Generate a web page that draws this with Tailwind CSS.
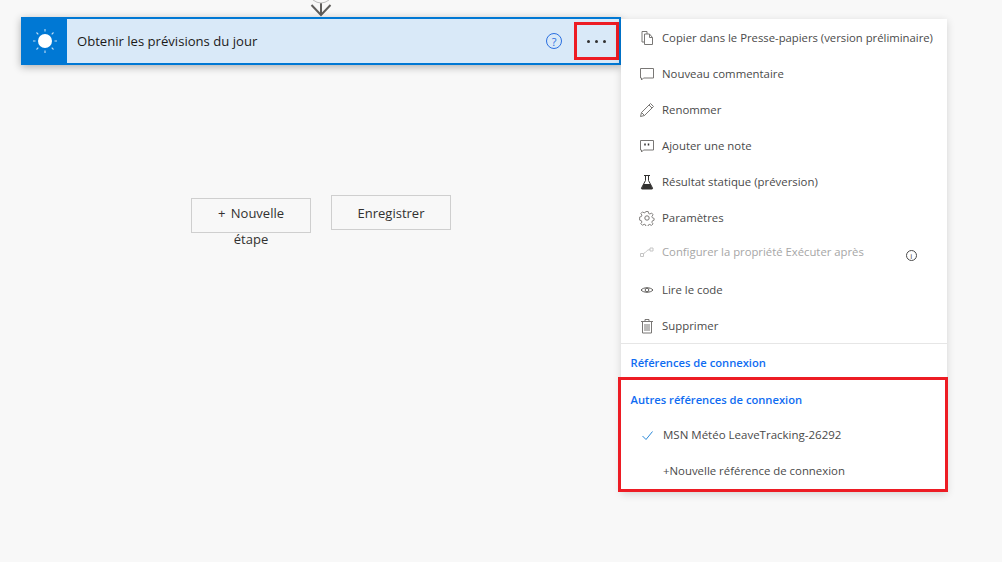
<!DOCTYPE html>
<html lang="fr">

<head>
  <meta charset="UTF-8" />
  <title>Obtenir les prévisions du jour</title>
  <script src="https://cdn.jsdelivr.net/npm/@tailwindcss/browser@4"></script>
</head>

<body class="bg-[#f8f8f8] text-[#323130] font-['Open_Sans','Noto_Sans',sans-serif] overflow-hidden">
  <div class="flex w-[1002px] h-[562px] items-start">

    <!-- Flow canvas -->
    <div class="w-[621px] shrink-0 pl-[21px]">
      <div class="h-[17px] pl-[288px] overflow-hidden">
        <svg width="24" height="17" viewBox="0 0 24 17" fill="none">
          <path d="M12 3v12" stroke="#605e5c" stroke-width="2" />
          <path d="M2.500 5 12 15 21.500 5" stroke="#605e5c" stroke-width="2" />
          <path d="M4 0Q12 6 20 0" stroke="#bdbdbd" stroke-width="1" />
        </svg>
      </div>

      <div class="relative flex w-[600px] h-[48px] border-2 border-l-0 border-[#0078d4] bg-[#d9e9f8] shadow-[0_2px_8px_rgba(0,0,0,0.3)]">
        <div class="flex w-[46px] h-[48px] -my-[2px] pl-px shrink-0 items-center justify-center bg-[#0078d4]">
          <svg width="24" height="24" viewBox="0 0 24 24" fill="none">
            <circle cx="12" cy="12" r="7" fill="#fff" />
            <path d="M12 0v2.500M12 21.500V24M0 12h2.500M21.500 12H24M3.500 3.500 5.300 5.300M18.700 18.700l1.800 1.800M3.500 20.500l1.800-1.800M18.700 5.300l1.800-1.800" stroke="#fff" stroke-width="1.100" opacity="0.75" />
          </svg>
        </div>
        <span class="ml-[10px] text-[13.100px] leading-[44px] text-[#1b1a19]">Obtenir les prévisions du jour</span>
        <div class="ml-auto flex items-center">
          <span class="flex w-4 h-4 items-center justify-center rounded-full border border-[#2a6fe0] text-[11px] leading-none text-[#2a6fe0]">?</span>
          <div class="flex ml-[12px] w-[45px] h-[38px] items-center justify-center gap-[5px] border-[3px] border-[#ed1c24]">
            <span class="w-[3px] h-[3px] rounded-full bg-[#323130]"></span>
            <span class="w-[3px] h-[3px] rounded-full bg-[#323130]"></span>
            <span class="w-[3px] h-[3px] rounded-full bg-[#323130]"></span>
          </div>
        </div>
      </div>

      <div class="flex items-start gap-5 pl-[170px] pt-[130px]">
        <div class="w-[120px] mt-[3px]">
          <div class="h-[35px] border border-[#cfcfcf] text-center text-[13px] leading-[28px]"><span class="mr-[2px]">+</span> Nouvelle</div>
          <div class="-mt-px text-center text-[13px] leading-[14px]">étape</div>
        </div>
        <div class="w-[120px] h-[35px] border border-[#cfcfcf] text-center text-[13px] leading-[35px]">Enregistrer</div>
      </div>
    </div>

    <!-- Context menu -->
    <div class="relative w-[326px] mt-[19px] pt-px bg-white shadow-[0_2px_8px_rgba(0,0,0,0.15)] text-[11.400px] text-[#4a4a4a]">
      <ul>
        <li class="flex h-9 items-center pl-[18px] gap-[7px] text-[11.300px]">
          <svg class="w-4 h-4 shrink-0" viewBox="0 0 16 16" fill="none" stroke="#797775"><path d="M8 4V1.500H3V12h2.500" /><path d="M5.500 4h5l3 3.500v7h-8zM10.500 4v3.500h3" /></svg>
          <span>Copier dans le Presse-papiers (version préliminaire)</span>
        </li>
        <li class="flex h-9 items-center pl-[18px] gap-[7px]">
          <svg class="w-4 h-4 shrink-0" viewBox="0 0 16 16" fill="none" stroke="#797775"><path d="M1.500 2.500h13v9.500h-10l-2 2v-2h-1z" /></svg>
          <span>Nouveau commentaire</span>
        </li>
        <li class="flex h-9 items-center pl-[18px] gap-[7px]">
          <svg class="w-4 h-4 shrink-0" viewBox="0 0 16 16" fill="none" stroke="#797775"><path d="M1.500 14.500l1-4L11.500 1.500l3 3-9 9zM2.500 10.500l3 3M10 3l3 3" /></svg>
          <span>Renommer</span>
        </li>
        <li class="flex h-9 items-center pl-[18px] gap-[7px]">
          <svg class="w-4 h-4 shrink-0" viewBox="0 0 16 16" fill="none" stroke="#797775"><path d="M1.500 2.500h13v9.500h-10l-2 2v-2h-1z" /><path d="M6 5.500v2M9.500 5.500v2" stroke="#323130" stroke-width="1.500" /></svg>
          <span>Ajouter une note</span>
        </li>
        <li class="flex h-9 items-center pl-[18px] gap-[7px]">
          <svg class="w-4 h-4 shrink-0" viewBox="0 0 16 16" fill="none" stroke="#323130"><path d="M5 1.500h6M6.500 1.500v5l-4 7.500a.7.7 0 0 0 .6 1h9.800a.7.7 0 0 0 .6-1l-4-7.500v-5" /><path d="M4.500 10h7l2 5h-11z" fill="#323130" stroke="none" /></svg>
          <span>Résultat statique (préversion)</span>
        </li>
        <li class="flex h-9 items-center pl-[18px] gap-[7px]">
          <svg class="w-4 h-4 shrink-0" viewBox="0 0 16 16" fill="none" stroke="#797775"><circle cx="8" cy="8" r="2.200" /><path d="M6.800 1.500h2.400l.4 1.900 1.300.6 1.700-1 1.500 1.800-1.200 1.500.4 1.400 1.800.7v1.800l-1.800.7-.4 1.400 1.100 1.600-1.600 1.600-1.600-1.100-1.400.5-.4 1.500H6.900l-.5-1.700-1.300-.5-1.600 1.100-1.700-1.700 1.100-1.500-.5-1.400-1.800-.6V7.100l1.800-.6.5-1.400-1-1.600 1.600-1.600 1.600 1 1.300-.5z" stroke-width="0.900" /></svg>
          <span>Paramètres</span>
        </li>
        <li class="flex h-9 items-center pl-[18px] gap-[7px] text-[11.300px] text-[#a6a6a6]">
          <svg class="w-4 h-4 shrink-0 -mt-[4px]" viewBox="0 0 16 16" fill="none" stroke="#c4c4c4"><path d="M1.500 9.500h3v3h-3zM4.500 9.500C7 9 7.500 5.500 11 5.500M11 4h3v3h-3z" /></svg>
          <span class="-mt-[4px]">Configurer la propriété Exécuter après</span>
          <span class="flex ml-[35px] mt-[3px] w-[11px] h-[11px] items-center justify-center rounded-full border border-[#4a4a4a] text-[8px] leading-none text-[#4a4a4a]">i</span>
        </li>
        <li class="flex h-9 items-center pl-[18px] gap-[7px]">
          <svg class="w-4 h-4 shrink-0" viewBox="0 0 16 16" fill="none" stroke="#605e5c"><path d="M2 8C4.500 5 11.500 5 14 8 11.500 11 4.500 11 2 8z" /><circle cx="8" cy="8" r="1.800" /></svg>
          <span>Lire le code</span>
        </li>
        <li class="flex h-[35px] items-center pl-[18px] gap-[7px]">
          <svg class="w-4 h-4 shrink-0" viewBox="0 0 16 16" fill="none" stroke="#797775"><path d="M2 3.500h12M6 3.500v-2h4v2M3.500 3.500v11.500h9V3.500M6 6v7M8 6v7M10 6v7" /></svg>
          <span>Supprimer</span>
        </li>
      </ul>
      <div class="h-9 border-t border-[#e6e6e6] pl-[9.500px] text-[11.200px] font-semibold leading-[37px] text-[#0f6cf2]">Références de connexion</div>
      <div class="w-[330px] -ml-[3px] -mt-[2px] border-[3px] border-[#ed1c24]">
        <div class="h-[37px] pl-[9.500px] text-[11.200px] font-semibold leading-[39px] text-[#0f6cf2]">Autres références de connexion</div>
        <div class="flex h-9 items-center pl-[21px] gap-[10px] text-[11.500px]">
          <svg class="w-[11px] h-[11px] shrink-0" viewBox="0 0 11 11" fill="none" stroke="#2b88d8"><path d="M.5 6 4 9.500 10.500 1.500" /></svg>
          <span>MSN Météo LeaveTracking-26292</span>
        </div>
        <div class="h-9 pl-[42px] leading-[36px]">+Nouvelle référence de connexion</div>
      </div>
    </div>

  </div>
</body>

</html>
